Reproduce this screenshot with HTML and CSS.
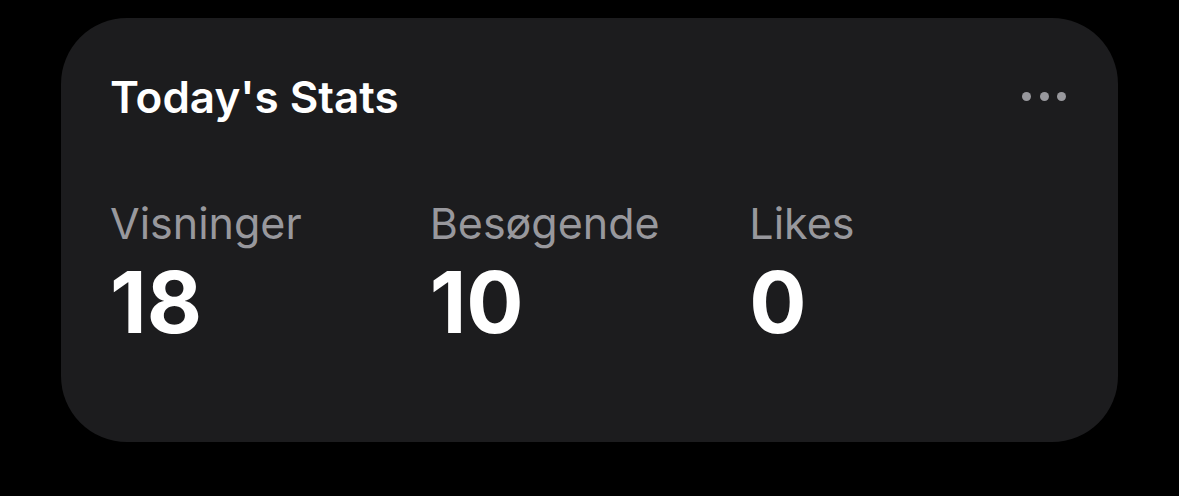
FILE: index.html
```html
<!DOCTYPE html>
<html lang="da">
<head>
<meta charset="utf-8">
<title>Today's Stats</title>
<link rel="stylesheet" href="styles.css">
</head>
<body>
<div class="page">
  <section class="card">
    <header class="card-header">
      <h1 class="title">Today's Stats</h1>
      <button class="more" aria-label="More">
        <span class="dot"></span><span class="dot"></span><span class="dot"></span>
      </button>
    </header>
    <div class="stats">
      <div class="stat">
        <div class="label">Visninger</div>
        <div class="value">18</div>
      </div>
      <div class="stat">
        <div class="label">Besøgende</div>
        <div class="value">10</div>
      </div>
      <div class="stat">
        <div class="label">Likes</div>
        <div class="value">0</div>
      </div>
    </div>
  </section>
</div>
</body>
</html>
```
FILE: styles.css
```css
* { box-sizing: border-box; }
html, body {
  margin: 0;
  background: #000;
  width: 1179px;
  height: 496px;
  overflow: hidden;
  font-family: Inter, "Noto Sans", "Liberation Sans", sans-serif;
}
.page {
  padding: 18px 0 0 61px;
}
.card {
  width: 1057px;
  height: 424px;
  background: #1c1c1e;
  border-radius: 66px;
  padding: 0 49px;
}
.card-header {
  display: flex;
  align-items: center;
  justify-content: space-between;
  height: 157px;
}
.title {
  margin: 0;
  color: #fff;
  font-size: 44px;
  font-weight: 600;
  line-height: 1;
}
.more {
  display: flex;
  gap: 8.5px;
  background: none;
  border: 0;
  padding: 0;
  margin-right: 3px;
}
.dot {
  width: 9px;
  height: 9px;
  border-radius: 50%;
  background: #98989d;
}
.stats {
  display: flex;
  margin-top: 24px;
}
.stat {
  width: 320.5px;
  display: flex;
  flex-direction: column;
}
.label {
  color: #98989d;
  font-size: 43px;
  font-weight: 400;
  line-height: 48px;
}
.value {
  color: #fff;
  font-size: 85px;
  font-weight: 700;
  line-height: 1;
  margin-top: 13px;
}
```
